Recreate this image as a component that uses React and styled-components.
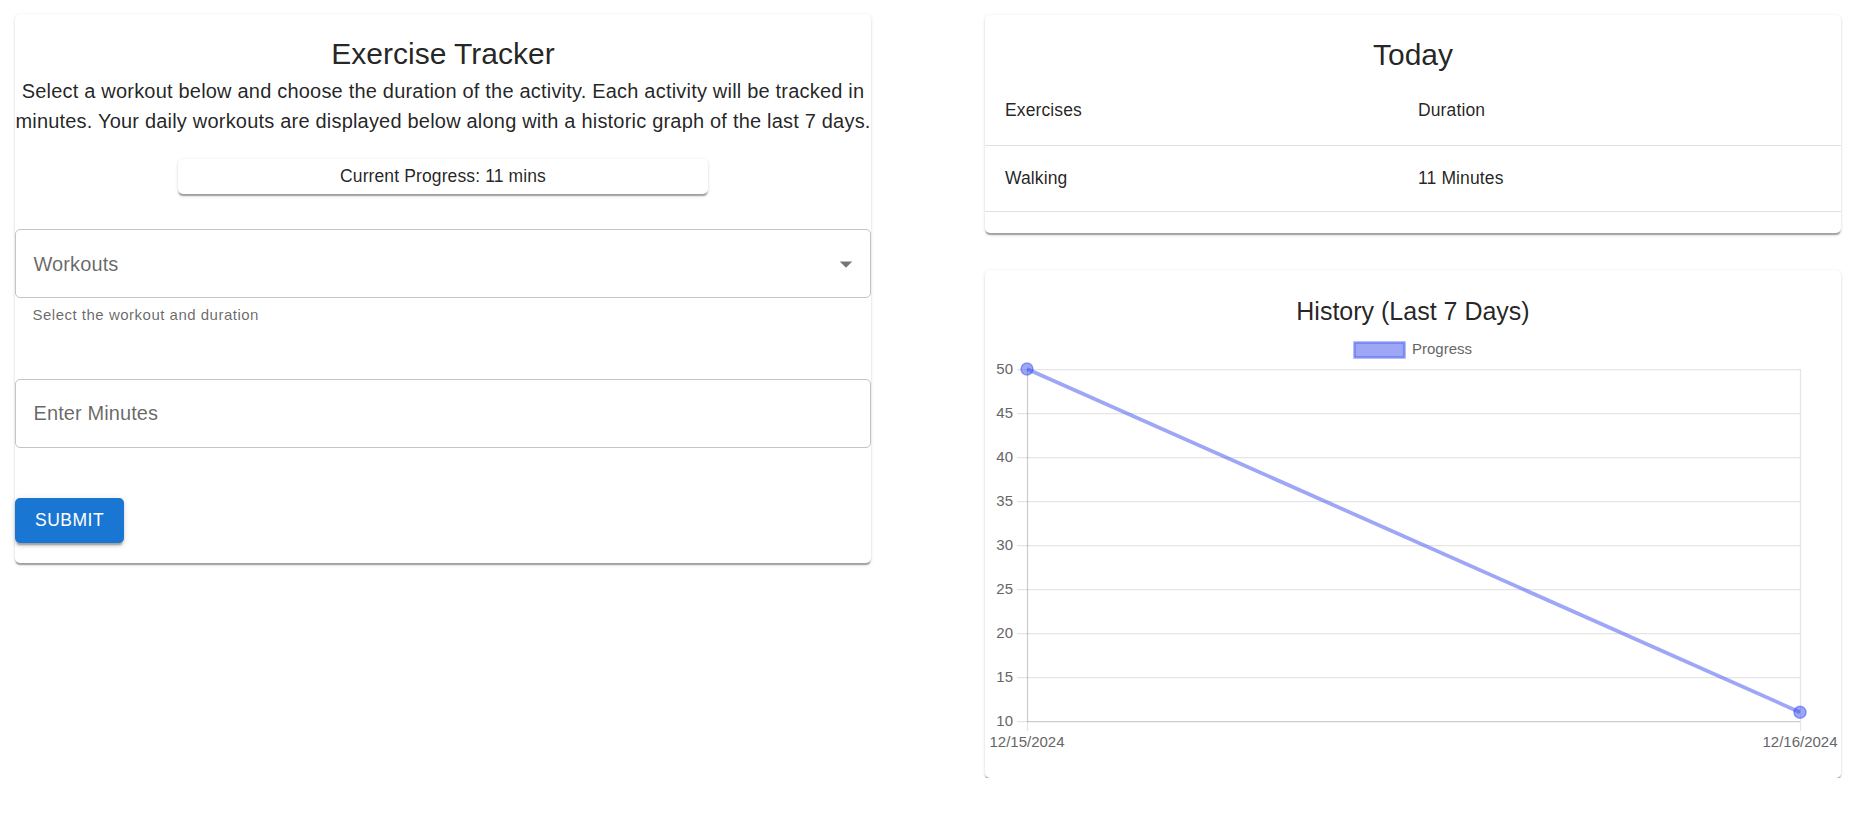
import React from "react";
import styled, { createGlobalStyle } from "styled-components";

const Global = createGlobalStyle`
  html, body { margin: 0; padding: 0; background: #fff; }
  body { font-family: "Liberation Sans", Arial, sans-serif; color: rgba(0,0,0,0.87); }
  * { box-sizing: border-box; }
`;

const Page = styled.div`
  display: flex;
  align-items: flex-start;
  gap: 114px;
  padding: 14px 0 0 15px;
`;

const Column = styled.div`
  width: 856px;
  display: flex;
  flex-direction: column;
  gap: 37px;
  margin-top: ${(p) => p.$offset || 0}px;
`;

const Card = styled.div`
  background: #fff;
  border-radius: 5px;
  box-shadow: 0 2.5px 1.25px -1.25px rgba(0,0,0,0.2), 0 1.25px 1.25px 0 rgba(0,0,0,0.14), 0 1.25px 3.75px 0 rgba(0,0,0,0.12);
  display: flex;
  flex-direction: column;
  padding: ${(p) => p.$pt}px 0 ${(p) => p.$pb}px;
`;

const Title = styled.h2`
  margin: 0;
  text-align: center;
  font-weight: 400;
  font-size: ${(p) => p.$size}px;
  line-height: 40px;
  color: rgba(0,0,0,0.87);
`;

const Intro = styled.p`
  margin: 2px 0 0;
  text-align: center;
  font-size: 20px;
  line-height: 30px;
  letter-spacing: 0.2px;
`;

const ProgressBox = styled.div`
  align-self: center;
  width: 530px;
  margin-top: 23px;
  padding: 5px;
  text-align: center;
  font-size: 17.5px;
  line-height: 25px;
  letter-spacing: 0.12px;
  border-radius: 5px;
  box-shadow: 0 2.5px 1.25px -1.25px rgba(0,0,0,0.2), 0 1.25px 1.25px 0 rgba(0,0,0,0.14), 0 1.25px 3.75px 0 rgba(0,0,0,0.12);
`;

const Field = styled.div`
  margin-top: ${(p) => p.$mt}px;
  height: 69px;
  border: 1px solid rgba(0,0,0,0.23);
  border-radius: 5px;
  display: flex;
  align-items: center;
  justify-content: space-between;
  padding: 0 9px 0 17.5px;
`;

const FieldLabel = styled.span`
  font-size: 20px;
  line-height: 28px;
  letter-spacing: 0.1px;
  color: rgba(0,0,0,0.6);
`;

const Helper = styled.div`
  margin: 3.75px 17.5px 0;
  font-size: 15px;
  line-height: 25px;
  letter-spacing: 0.5px;
  color: rgba(0,0,0,0.6);
`;

const SubmitButton = styled.button`
  align-self: flex-start;
  margin-top: 50px;
  height: 45px;
  padding: 0 20px;
  border: none;
  border-radius: 5px;
  background: #1976d2;
  color: #fff;
  font-family: inherit;
  font-size: 17.5px;
  font-weight: 500;
  letter-spacing: 0.5px;
  text-transform: uppercase;
  box-shadow: 0 3.75px 1.25px -2.5px rgba(0,0,0,0.2), 0 2.5px 2.5px 0 rgba(0,0,0,0.14), 0 1.25px 6.25px 0 rgba(0,0,0,0.12);
`;

const Table = styled.div`
  margin-top: 1px;
  display: flex;
  flex-direction: column;
`;

const TableRow = styled.div`
  display: grid;
  grid-template-columns: 413px 1fr;
  border-bottom: 1px solid #e0e0e0;
`;

const Cell = styled.div`
  padding: 20px 20px;
  font-size: 17.5px;
  line-height: ${(p) => (p.$head ? 29 : 25)}px;
  letter-spacing: 0.12px;
  color: rgba(0,0,0,0.87);
`;

const ChartSvg = styled.svg`
  display: block;
  margin-top: 4px;
  width: 856px;
  height: 425px;
  font-family: "Liberation Sans", Arial, sans-serif;
`;

function ArrowDrop() {
  return (
    <svg width="30" height="30" viewBox="0 0 24 24" aria-hidden="true">
      <path d="M7 10l5 5 5-5z" fill="rgba(0,0,0,0.54)" />
    </svg>
  );
}

function HistoryChart() {
  const x0 = 42, x1 = 815, y0 = 34, y1 = 386;
  const ticks = [50, 45, 40, 35, 30, 25, 20, 15, 10];
  const yFor = (v) => y1 - ((v - 10) / 40) * (y1 - y0);
  const data = [
    { x: x0, v: 50, label: "12/15/2024" },
    { x: x1, v: 11, label: "12/16/2024" },
  ];
  const grid = "rgba(0,0,0,0.1)";
  const c = "rgba(60,80,238,0.5)";
  return (
    <ChartSvg viewBox="0 0 856 425">
      <rect x="369.5" y="7.5" width="50" height="15" fill={c} stroke={c} strokeWidth="2.5" />
      <text x="427" y="15" fontSize="15" fill="#666" dominantBaseline="middle">Progress</text>
      {ticks.map((t) => (
        <g key={t}>
          <line x1={x0 - 10} x2={x1} y1={yFor(t) + 0.5} y2={yFor(t) + 0.5} stroke={grid} strokeWidth="1.25" />
          <text x="28" y={yFor(t) + 1} fontSize="15" fill="#666" textAnchor="end" dominantBaseline="middle">{t}</text>
        </g>
      ))}
      {data.map((d) => (
        <g key={d.label}>
          <line x1={d.x + 0.5} x2={d.x + 0.5} y1={y0} y2={y1 + 10} stroke={grid} strokeWidth="1.25" />
          <text x={d.x} y="408" fontSize="15" fill="#666" textAnchor="middle" dominantBaseline="middle">{d.label}</text>
        </g>
      ))}
      <line x1={x0 + 0.5} x2={x0 + 0.5} y1={y0} y2={y1} stroke={grid} strokeWidth="1.25" />
      <line x1={x0} x2={x1} y1={y1 + 0.5} y2={y1 + 0.5} stroke={grid} strokeWidth="1.25" />
      <polyline
        points={data.map((d) => `${d.x},${yFor(d.v)}`).join(" ")}
        fill="none"
        stroke={c}
        strokeWidth="3.75"
      />
      {data.map((d) => (
        <circle key={d.label} cx={d.x} cy={yFor(d.v)} r="6" fill={c} stroke={c} strokeWidth="1.5" />
      ))}
    </ChartSvg>
  );
}

export default function App() {
  return (
    <>
      <Global />
      <Page>
        <Column>
          <Card $pt={20} $pb={20}>
            <Title $size={30}>Exercise Tracker</Title>
            <Intro>
              Select a workout below and choose the duration of the activity. Each activity will be tracked in
              minutes. Your daily workouts are displayed below along with a historic graph of the last 7 days.
            </Intro>
            <ProgressBox>Current Progress: 11 mins</ProgressBox>
            <Field $mt={35}>
              <FieldLabel>Workouts</FieldLabel>
              <ArrowDrop />
            </Field>
            <Helper>Select the workout and duration</Helper>
            <Field $mt={52}>
              <FieldLabel>Enter Minutes</FieldLabel>
            </Field>
            <SubmitButton>Submit</SubmitButton>
          </Card>
        </Column>
        <Column $offset={1}>
          <Card $pt={20} $pb={21}>
            <Title $size={30}>Today</Title>
            <Table>
              <TableRow>
                <Cell $head>Exercises</Cell>
                <Cell $head>Duration</Cell>
              </TableRow>
              <TableRow>
                <Cell>Walking</Cell>
                <Cell>11 Minutes</Cell>
              </TableRow>
            </Table>
          </Card>
          <Card $pt={21} $pb={18}>
            <Title $size={25}>History (Last 7 Days)</Title>
            <HistoryChart />
          </Card>
        </Column>
      </Page>
    </>
  );
}
